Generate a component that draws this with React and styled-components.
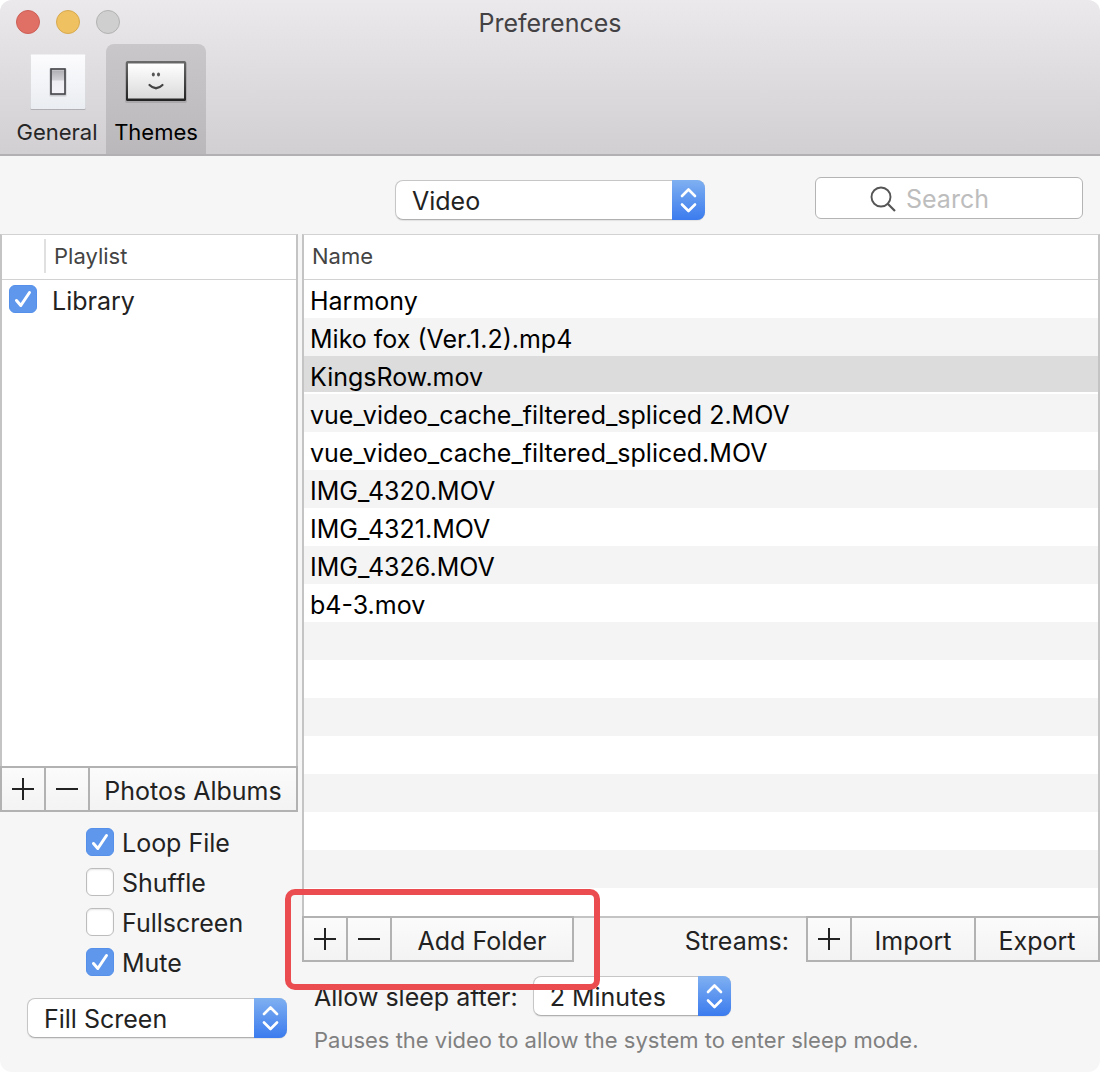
import React, { useState } from "react";
import styled, { createGlobalStyle, css } from "styled-components";

const GlobalStyle = createGlobalStyle`
  *, *::before, *::after { box-sizing: border-box; }
  body { margin: 0; background: #fff; }
  body, button, input, select {
    font-family: Inter, "Liberation Sans", sans-serif;
    font-size: 25px;
    color: #222;
  }
`;

const Window = styled.div`
  display: flex;
  flex-direction: column;
  min-height: 100vh;
  border-radius: 12px;
  overflow: hidden;
  background: #f6f6f6;
  line-height: 30px;
`;

const Header = styled.header`
  background: linear-gradient(#ebe9eb, #d1cfd1);
  border-bottom: 2px solid #b2b0b2;
`;

const TitleBar = styled.div`
  display: grid;
  grid-template-columns: 1fr auto 1fr;
  align-items: center;
  height: 44px;
  padding: 0 16px;
`;

const Lights = styled.div`
  display: flex;
  gap: 16px;
`;

const Light = styled.button`
  width: 24px;
  height: 24px;
  padding: 0;
  border: 1px solid ${(p) => p.$edge};
  border-radius: 50%;
  background: ${(p) => p.$fill};
`;

const Title = styled.h1`
  margin: 0;
  padding-top: 2px;
  font-size: 25px;
  font-weight: 400;
  color: #434143;
`;

const Toolbar = styled.nav`
  display: flex;
  padding-left: 8px;
`;

const ToolButton = styled.button`
  display: flex;
  flex-direction: column;
  align-items: center;
  gap: 7px;
  height: 110px;
  width: ${(p) => p.$width};
  padding: 10px 0 0;
  border: 0;
  border-radius: 8px 8px 0 0;
  background: ${(p) => (p.$active ? "linear-gradient(#c9c7c9, #bab8ba)" : "none")};
  color: ${(p) => (p.$active ? "#000" : "#262626")};
  font-size: 22px;
  line-height: 30px;
`;

const FilterBar = styled.div`
  display: grid;
  grid-template-columns: 1fr 310px 1fr;
  align-items: center;
  height: 78px;
  padding: 10px 17px 0;
`;

const Overlay = styled.span`
  display: inline-grid;
  align-items: center;
  width: ${(p) => p.$width || "auto"};
  > * { grid-area: 1 / 1; }
  > svg { pointer-events: none; }
`;

const SelectBox = styled.select`
  appearance: none;
  width: 100%;
  height: 40px;
  padding: 2px 48px 0 16px;
  border: 1px solid #c6c6c6;
  border-bottom-color: #b0b0b0;
  border-radius: 8px;
  background: #fff;
  box-shadow: 0 1px 1px rgba(0, 0, 0, 0.08);
`;

const Stepper = styled.svg`
  justify-self: end;
  width: 33px;
  height: 40px;
`;

const SearchBox = styled(Overlay)`
  justify-self: end;
  margin-top: -4px;
  > svg { margin-left: 54px; }
`;

const SearchInput = styled.input`
  width: 100%;
  height: 42px;
  padding: 2px 8px 0 90px;
  border: 1px solid #b4b4b4;
  border-radius: 6px;
  background: #fff;
  &::placeholder { color: #bdbdbd; opacity: 1; }
`;

const Main = styled.main`
  flex: 1;
  display: grid;
  grid-template-columns: 298px 1fr;
  column-gap: 4px;
`;

const Column = styled.section`
  display: flex;
  flex-direction: column;
  min-width: 0;
`;

const Pane = styled.div`
  flex: 1;
  border: solid #c4c4c4;
  border-width: 1px 2px 0;
  border-top-color: #d2d2d2;
  background: #fff;
  ${(p) =>
    p.$striped &&
    css`
      background: repeating-linear-gradient(#fff 0 38px, #f4f4f5 38px 76px) 0 45px no-repeat;
      background-color: #fff;
    `}
`;

const Table = styled.table`
  width: 100%;
  border-collapse: separate;
  border-spacing: 0;
  text-align: left;
`;

const HeadCell = styled.th`
  height: 45px;
  padding: 0 0 2px;
  border-bottom: 1px solid #d2d2d2;
  background: #fff;
  font-size: 22px;
  font-weight: 400;
  color: #444;
`;

const HeadLabel = styled.span`
  display: block;
  height: 34px;
  padding-left: 8px;
  line-height: 34px;
  border-left: ${(p) => (p.$divided ? "2px solid #e0e0e0" : "0")};
`;

const CheckCell = styled.td`
  width: 42px;
  height: 38px;
  padding: 0 0 0 7px;
  line-height: 0;
`;

const NameCell = styled.td`
  height: 38px;
  padding: ${(p) => (p.$selected ? "6px" : "4px")} 6px 0 ${(p) => p.$inset || "6px"};
  line-height: 30px;
  color: ${(p) => (p.$strong ? "#000" : "#222")};
  ${(p) =>
    p.$selected &&
    css`
      background: #dcdcdc;
      border-bottom: 2px solid #fff;
    `}
`;

const Segments = styled.div`
  position: relative;
  display: flex;
  width: ${(p) => (p.$full ? "100%" : "auto")};
`;

const Segment = styled.button`
  display: flex;
  align-items: center;
  justify-content: center;
  flex: ${(p) => (p.$grow ? "1" : "none")};
  width: ${(p) => p.$width || "46px"};
  height: 46px;
  padding: ${(p) => (p.$width || p.$grow ? "4px" : "2px")} 0 0;
  border: 2px solid #b2b2b2;
  background: linear-gradient(#fbfbfb, #f3f3f3);
  white-space: nowrap;
  & + & { margin-left: -2px; }
`;

const Callout = styled.span`
  position: absolute;
  inset: -27px -26px -28px -17px;
  border: 6px solid #ea4c50;
  border-radius: 10px;
  pointer-events: none;
  z-index: 1;
`;

const Actions = styled.div`
  display: flex;
  align-items: flex-start;
  justify-content: space-between;
`;

const BottomLine = styled.div`
  border-top: 2px solid #c4c4c4;
  flex: 1;
  padding: 8px 17px 0 0;
  text-align: right;
`;

const PlaybackOptions = styled.div`
  display: flex;
  flex-direction: column;
  padding: 10px 11px 34px 27px;
`;

const Option = styled.label`
  display: flex;
  align-items: center;
  gap: 8px;
  height: 40px;
  padding-left: 59px;
  > span:last-child { padding-top: 2px; }
`;

const CheckInput = styled.input`
  appearance: none;
  width: 28px;
  height: 28px;
  margin: 0;
  border: 1px solid #bcbcbc;
  border-radius: 6px;
  background: #fff;
  box-shadow: inset 0 1px 2px rgba(0, 0, 0, 0.1);
  &:checked {
    border-color: #5590ea;
    background: #5e97ec;
    box-shadow: none;
  }
  & + svg { visibility: hidden; }
  &:checked + svg { visibility: visible; }
`;

const ScaleField = styled.div`
  display: flex;
  margin-top: 16px;
`;

const SleepOptions = styled.div`
  padding: 14px 12px 17px;
`;

const SleepRow = styled.div`
  display: flex;
  align-items: center;
  gap: 15px;
  > label { padding-top: 2px; }
`;

const Hint = styled.p`
  margin: 9px 0 0;
  font-size: 22px;
  color: #808080;
`;

function PopUp({ width, options, ...rest }) {
  return (
    <Overlay $width={width}>
      <SelectBox {...rest}>
        {options.map((o) => (
          <option key={o}>{o}</option>
        ))}
      </SelectBox>
      <Stepper viewBox="0 0 33 40" aria-hidden="true">
        <defs>
          <linearGradient id="stepper" x1="0" y1="0" x2="0" y2="1">
            <stop offset="0" stopColor="#7fb0f1" />
            <stop offset="1" stopColor="#3b7bee" />
          </linearGradient>
        </defs>
        <path d="M0 0H25A8 8 0 0 1 33 8V32A8 8 0 0 1 25 40H0Z" fill="url(#stepper)" />
        <path
          d="M10 16L16.500 9.500L23 16M10 24.500L16.500 31L23 24.500"
          fill="none"
          stroke="#fff"
          strokeWidth="2.600"
          strokeLinecap="round"
          strokeLinejoin="round"
        />
      </Stepper>
    </Overlay>
  );
}

function Check({ checked, ...rest }) {
  const [on, setOn] = useState(checked);
  return (
    <Overlay>
      <CheckInput type="checkbox" checked={on} onChange={() => setOn(!on)} {...rest} />
      <svg width="28" height="28" viewBox="0 0 28 28" aria-hidden="true">
        <path
          d="M7.500 15.500L11.800 20.500L20.500 7.500"
          fill="none"
          stroke="#fff"
          strokeWidth="3"
          strokeLinecap="round"
          strokeLinejoin="round"
        />
      </svg>
    </Overlay>
  );
}

function Glyph({ plus }) {
  return (
    <svg width="22" height="22" viewBox="0 0 22 22" overflow="visible" aria-hidden="true">
      <path d={plus ? "M0 10H22M11 -1V21" : "M0 10H22"} stroke="#222" strokeWidth="2" />
    </svg>
  );
}

function SwitchIcon() {
  return (
    <svg width="58" height="56" viewBox="0 0 58 56" aria-hidden="true">
      <defs>
        <linearGradient id="plate" x1="0" y1="0" x2="0" y2="1">
          <stop offset="0" stopColor="#fcfcfe" />
          <stop offset="1" stopColor="#eaedf1" />
        </linearGradient>
        <linearGradient id="rocker" x1="0" y1="0" x2="0" y2="1">
          <stop offset="0" stopColor="#d6d6da" />
          <stop offset="0.100" stopColor="#b4b4b8" />
          <stop offset="0.440" stopColor="#d2d2d6" />
          <stop offset="0.480" stopColor="#eeeef2" />
          <stop offset="1" stopColor="#f4f4f8" />
        </linearGradient>
      </defs>
      <rect x="2.500" y="1" width="55" height="55" rx="1" fill="#b0b0b4" />
      <rect x="2.500" y="0.500" width="55" height="54.500" rx="1" fill="url(#plate)" />
      <rect x="21" y="14" width="18" height="29" rx="2" fill="#dcdee2" />
      <rect x="22" y="15" width="16" height="27" rx="1" fill="#c8cace" />
      <rect x="23" y="15" width="14" height="25" fill="url(#rocker)" stroke="#444448" strokeWidth="1.600" />
    </svg>
  );
}

function ScreenIcon() {
  return (
    <svg width="64" height="56" viewBox="0 0 64 56" aria-hidden="true">
      <defs>
        <linearGradient id="frame" x1="0" y1="0" x2="0" y2="1">
          <stop offset="0" stopColor="#6a6a6a" />
          <stop offset="1" stopColor="#222" />
        </linearGradient>
        <linearGradient id="screen" x1="0" y1="0" x2="0" y2="1">
          <stop offset="0" stopColor="#fff" />
          <stop offset="1" stopColor="#dadada" />
        </linearGradient>
      </defs>
      <rect x="1" y="8" width="62" height="41" rx="2" fill="#aaa8aa" />
      <rect x="2" y="7" width="60" height="40" rx="1.500" fill="url(#frame)" />
      <rect x="4" y="9.500" width="56" height="35" fill="url(#screen)" />
      <ellipse cx="29.300" cy="20.500" rx="1.500" ry="1.900" fill="#555" />
      <ellipse cx="34.500" cy="20.500" rx="1.500" ry="1.900" fill="#555" />
      <path d="M25.500 31Q32 37.500 38.500 31" fill="none" stroke="#444" strokeWidth="2.200" strokeLinecap="round" />
    </svg>
  );
}

const files = [
  "Harmony",
  "Miko fox (Ver.1.2).mp4",
  "KingsRow.mov",
  "vue_video_cache_filtered_spliced 2.MOV",
  "vue_video_cache_filtered_spliced.MOV",
  "IMG_4320.MOV",
  "IMG_4321.MOV",
  "IMG_4326.MOV",
  "b4-3.mov",
];

const playback = [
  ["Loop File", true],
  ["Shuffle", false],
  ["Fullscreen", false],
  ["Mute", true],
];

export default function App() {
  return (
    <Window>
      <GlobalStyle />
      <Header>
        <TitleBar>
          <Lights>
            <Light aria-label="Close" $fill="#e07066" $edge="#cc5f57" />
            <Light aria-label="Minimize" $fill="#f0c160" $edge="#d6a950" />
            <Light aria-label="Zoom" $fill="#cfcfcf" $edge="#b2b2b2" />
          </Lights>
          <Title>Preferences</Title>
        </TitleBar>
        <Toolbar>
          <ToolButton $width="98px">
            <SwitchIcon />
            General
          </ToolButton>
          <ToolButton $width="100px" $active aria-current="page">
            <ScreenIcon />
            Themes
          </ToolButton>
        </Toolbar>
      </Header>

      <FilterBar>
        <span />
        <PopUp aria-label="Media type" options={["Video"]} />
        <SearchBox $width="268px">
          <SearchInput type="text" placeholder="Search" aria-label="Search" />
          <svg width="28" height="28" viewBox="0 0 28 28" aria-hidden="true">
            <circle cx="12" cy="13" r="9.500" fill="none" stroke="#555" strokeWidth="1.900" />
            <path d="M19 20L26 27" stroke="#555" strokeWidth="2.200" />
          </svg>
        </SearchBox>
      </FilterBar>

      <Main>
        <Column>
          <Pane>
            <Table>
              <thead>
                <tr>
                  <HeadCell aria-label="Enabled" />
                  <HeadCell>
                    <HeadLabel $divided>Playlist</HeadLabel>
                  </HeadCell>
                </tr>
              </thead>
              <tbody>
                <tr>
                  <CheckCell>
                    <Check checked aria-label="Library" />
                  </CheckCell>
                  <NameCell $inset="8px">Library</NameCell>
                </tr>
              </tbody>
            </Table>
          </Pane>
          <Segments $full>
            <Segment aria-label="Add playlist">
              <Glyph plus />
            </Segment>
            <Segment aria-label="Remove playlist">
              <Glyph />
            </Segment>
            <Segment $grow>Photos Albums</Segment>
          </Segments>
          <PlaybackOptions>
            {playback.map(([name, on]) => (
              <Option key={name}>
                <Check checked={on} />
                <span>{name}</span>
              </Option>
            ))}
            <ScaleField>
              <PopUp width="100%" aria-label="Scaling" options={["Fill Screen"]} />
            </ScaleField>
          </PlaybackOptions>
        </Column>

        <Column>
          <Pane $striped>
            <Table>
              <thead>
                <tr>
                  <HeadCell>
                    <HeadLabel>Name</HeadLabel>
                  </HeadCell>
                </tr>
              </thead>
              <tbody>
                {files.map((name) => (
                  <tr key={name}>
                    <NameCell $strong $selected={name === "KingsRow.mov"}>
                      {name}
                    </NameCell>
                  </tr>
                ))}
              </tbody>
            </Table>
          </Pane>
          <Actions>
            <Segments>
              <Segment aria-label="Add video">
                <Glyph plus />
              </Segment>
              <Segment aria-label="Remove video">
                <Glyph />
              </Segment>
              <Segment $width="184px">Add Folder</Segment>
              <Callout />
            </Segments>
            <BottomLine>Streams:</BottomLine>
            <Segments>
              <Segment aria-label="Add stream">
                <Glyph plus />
              </Segment>
              <Segment $width="126px">Import</Segment>
              <Segment $width="126px">Export</Segment>
            </Segments>
          </Actions>
          <SleepOptions>
            <SleepRow>
              <label htmlFor="sleep">Allow sleep after:</label>
              <PopUp id="sleep" width="198px" options={["2 Minutes"]} />
            </SleepRow>
            <Hint>Pauses the video to allow the system to enter sleep mode.</Hint>
          </SleepOptions>
        </Column>
      </Main>
    </Window>
  );
}
